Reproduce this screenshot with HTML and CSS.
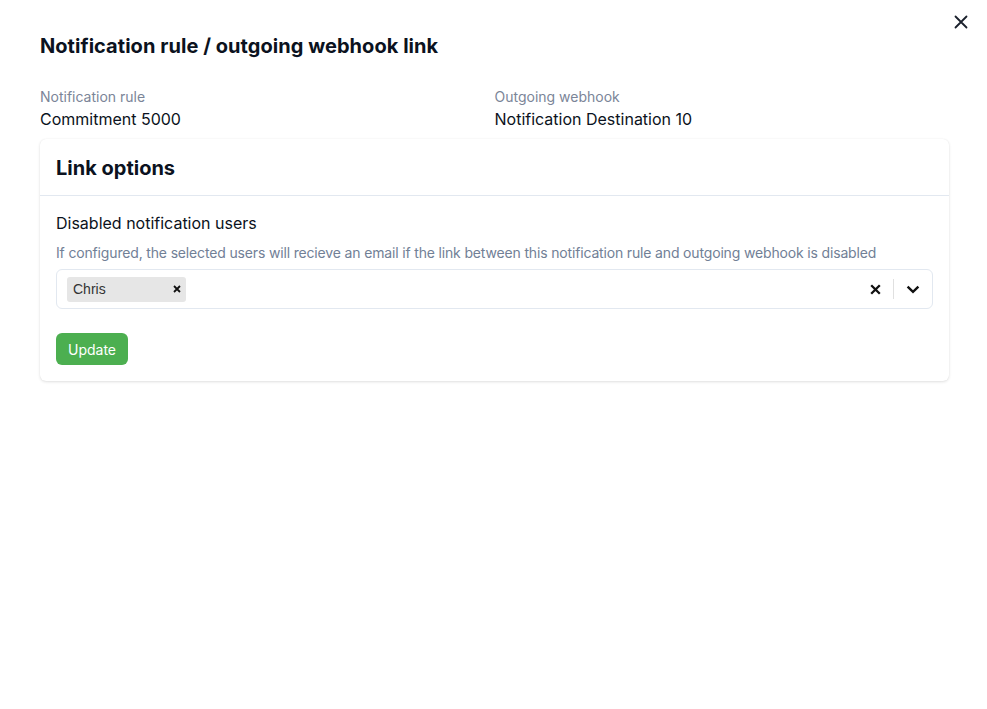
FILE: index.html
```html
<!DOCTYPE html>
<html>
<head>
<meta charset="utf-8">
<link rel="stylesheet" href="styles.css">
</head>
<body>
<div class="modal">
  <button class="close" aria-label="Close">
    <svg width="14" height="14" viewBox="0 0 14 14"><path d="M1.5 1.5L12.5 12.5M12.5 1.5L1.5 12.5" stroke="#1a202c" stroke-width="1.8" stroke-linecap="round"/></svg>
  </button>
  <h1 class="title">Notification rule / outgoing webhook link</h1>
  <div class="meta">
    <div class="meta-item">
      <div class="meta-label">Notification rule</div>
      <div class="meta-value">Commitment 5000</div>
    </div>
    <div class="meta-item">
      <div class="meta-label">Outgoing webhook</div>
      <div class="meta-value">Notification Destination 10</div>
    </div>
  </div>
  <div class="card">
    <div class="card-header">Link options</div>
    <div class="card-body">
      <div class="field-label">Disabled notification users</div>
      <div class="field-help">If configured, the selected users will recieve an email if the link between this notification rule and outgoing webhook is disabled</div>
      <div class="select">
        <div class="select-values">
          <span class="tag">Chris
            <svg class="tag-x" width="8" height="8" viewBox="0 0 8 8"><path d="M1 1L7 7M7 1L1 7" stroke="#111" stroke-width="1.8"/></svg>
          </span>
        </div>
        <div class="select-indicators">
          <span class="ind">
            <svg width="11" height="11" viewBox="0 0 11 11"><path d="M1.2 1.2L9.8 9.8M9.8 1.2L1.2 9.8" stroke="#111" stroke-width="2.3"/></svg>
          </span>
          <span class="sep"></span>
          <span class="ind">
            <svg width="14" height="9" viewBox="0 0 14 9"><path d="M1.6 1.6L7 6.8L12.4 1.6" fill="none" stroke="#111" stroke-width="2.4"/></svg>
          </span>
        </div>
      </div>
      <button class="btn">Update</button>
    </div>
  </div>
</div>
</body>
</html>
```
FILE: styles.css
```css
* { box-sizing: border-box; }
html, body { margin: 0; padding: 0; background: #fff; }
body {
  font-family: "Inter", "DejaVu Sans", sans-serif;
  color: #0b1220;
}
.modal {
  position: relative;
  padding: 33px 38px 0 40px;
  min-height: 709px;
}
.close {
  position: absolute;
  top: 15px;
  right: 19px;
  border: 0;
  background: none;
  padding: 0;
  width: 14px;
  height: 14px;
  cursor: pointer;
}
.close svg { display: block; }
.title {
  margin: 0;
  font-size: 20px;
  font-weight: 700;
  line-height: 26px;
  letter-spacing: 0.05px;
}
.meta {
  display: grid;
  grid-template-columns: 1fr 1fr;
  margin-top: 28px;
}
.meta-label {
  font-size: 14px;
  line-height: 20px;
  color: #7b8598;
}
.meta-value {
  font-size: 16px;
  line-height: 22px;
  margin-top: 1px;
}
.card {
  margin-top: 9px;
  border-radius: 6px;
  box-shadow: 0 1px 3px rgba(0,0,0,0.12), 0 0 1px rgba(0,0,0,0.08);
  background: #fff;
}
.card-header {
  padding: 16px 16px 13px;
  font-size: 20px;
  font-weight: 700;
  line-height: 27px;
  border-bottom: 1px solid #e2e8f0;
}
.card-body {
  padding: 16px 16px 16px;
}
.field-label {
  font-size: 16px;
  line-height: 22px;
}
.field-help {
  margin-top: 9px;
  font-size: 14px;
  line-height: 20px;
  letter-spacing: -0.16px;
  color: #718096;
}
.select {
  margin-top: 6px;
  height: 40px;
  border: 1px solid #e2e8f0;
  border-radius: 6px;
  display: flex;
  align-items: center;
  justify-content: space-between;
  padding: 0 0 0 10px;
}
.tag {
  display: inline-flex;
  align-items: center;
  justify-content: space-between;
  width: 119px;
  height: 25px;
  padding: 0 5px 0 6px;
  background: #e6e6e6;
  border-radius: 3px;
  font-family: "Liberation Sans", Arial, sans-serif;
  font-size: 14px;
  color: #333;
}
.select-indicators {
  display: flex;
  align-items: center;
  height: 100%;
}
.ind {
  display: flex;
  align-items: center;
  padding: 0 12px;
}
.sep {
  width: 1px;
  height: 20px;
  background: #e0e0e0;
}
.btn {
  margin-top: 24px;
  background: #4caf50;
  color: #fff;
  border: 0;
  border-radius: 6px;
  height: 32px;
  padding: 0 12px;
  font-family: "Inter", sans-serif;
  font-size: 14px;
  cursor: pointer;
}
```
